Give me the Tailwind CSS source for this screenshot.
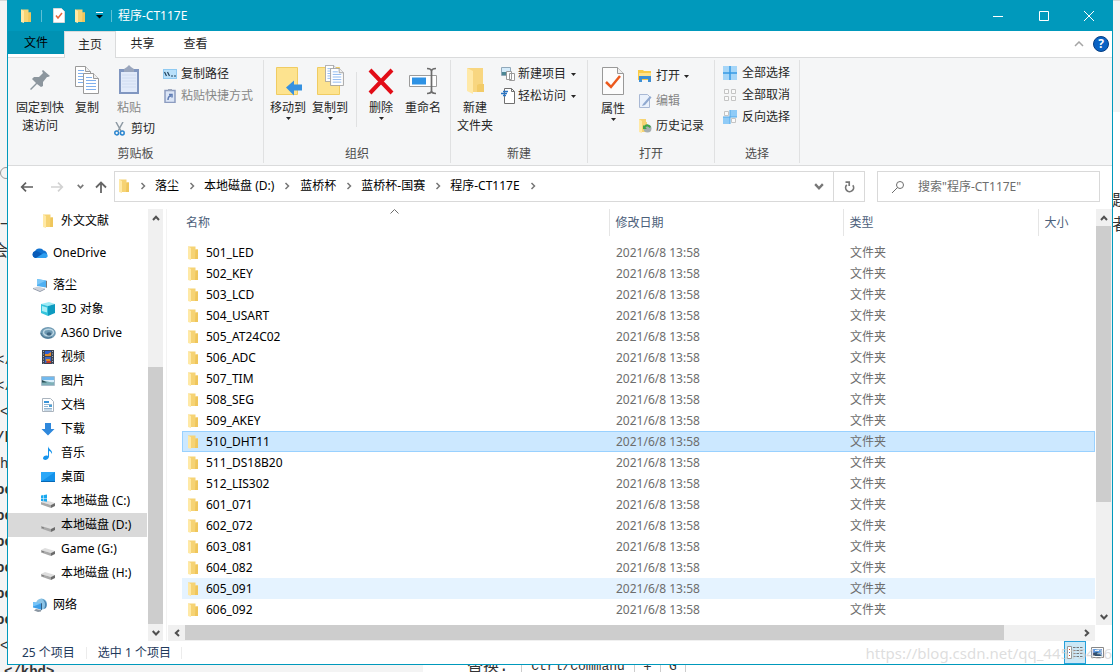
<!DOCTYPE html>
<html lang="zh-CN">
<head>
<meta charset="utf-8">
<title>程序-CT117E</title>
<script src="https://cdn.jsdelivr.net/npm/@tailwindcss/browser@4"></script>
</head>
<body class="relative h-screen overflow-hidden bg-[#f4f4f4] pl-[7px] pr-[7px] pb-[7px] font-['Noto_Sans','Noto_Sans_CJK_SC',sans-serif] text-[12px] leading-[18px] text-black">

<!-- Icon library -->
<svg class="hidden">
  <symbol id="folder" viewBox="0 0 12 16"><path d="M1 1.500h7.500v3H11v9.500H1z" fill="#f6d374"/><path d="M1 1.500l3 1.500v12L1 14z" fill="#ffe9a6"/><path d="M8.500 4.500H11V14H8z" fill="#efc65c"/></symbol>
  <symbol id="bigfolder" viewBox="0 0 18 28"><path d="M1 1h16v16h1v8H6z" fill="#f8d680"/><path d="M1 1l6 3v23l-6-3z" fill="#ffe9a8"/><path d="M13 17h5v8h-7V18z" fill="#f2cb68"/></symbol>
  <symbol id="caret" viewBox="0 0 5 3"><path d="M0 0h5L2.500 3z" fill="currentColor"/></symbol>
  <symbol id="up" viewBox="0 0 8 6"><path d="M1 5l3-3.200L7 5" fill="none" stroke="currentColor" stroke-width="2"/></symbol>
  <symbol id="down" viewBox="0 0 8 6"><path d="M0.700 1L4 4.500 7.300 1" fill="none" stroke="currentColor" stroke-width="2"/></symbol>
  <symbol id="left" viewBox="0 0 6 8"><path d="M5 1L1.800 4 5 7" fill="none" stroke="currentColor" stroke-width="2"/></symbol>
  <symbol id="right" viewBox="0 0 6 8"><path d="M1 1l3.200 3L1 7" fill="none" stroke="currentColor" stroke-width="2"/></symbol>
  <symbol id="crumb" viewBox="0 0 6 8"><path d="M1.500 1l3 3-3 3" fill="none" stroke="#777" stroke-width="1.500"/></symbol>
  <symbol id="page" viewBox="0 0 16 21"><path d="M.5.5h10l5 5v15H.5z" fill="#fff" stroke="#9a9a9a"/><path d="M10.500.500v5h5" fill="#eee" stroke="#9a9a9a"/><path d="M3 4.500h6M3 7.500h10M3 10.500h10M3 13.500h10M3 16.500h10" stroke="#7fb0ee"/></symbol>
  <symbol id="drive" viewBox="0 0 16 16"><path d="M1 9l4-2 10 3-4 2z" fill="#dedede"/><path d="M1 9l10 3v3L1 11.500z" fill="#a8a8a8"/><path d="M11 12l4-2v3l-4 2z" fill="#6b6b6b"/><path d="M2 10.500l2 .6" stroke="#777"/></symbol>
  <symbol id="cdrive" viewBox="0 0 16 16"><path d="M1 9l4-2 10 3-4 2z" fill="#dedede"/><path d="M1 9l10 3v3L1 11.500z" fill="#a8a8a8"/><path d="M11 12l4-2v3l-4 2z" fill="#6b6b6b"/><path d="M1 2.500l2.500-.4V5H1zM4 2l3-.4V5H4zM1 5.500h2.500v2.700L1 7.900zM4 5.500h3v3.200l-3-.4z" fill="#19a8ef"/></symbol>
  <symbol id="cloud" viewBox="0 0 16 16"><path d="M3.500 13a3.500 3.500 0 01-.6-6.700A5 5 0 0111.500 5.500 4 4 0 0113 13z" fill="#1172d0"/><path d="M3.500 13a3.500 3.500 0 010-6.900c2 0 5 2 8 3.900l2.500 2.500L13 13z" fill="#0a5cb8"/><path d="M4 13l7-4.500c3-1 5 1 4.700 2.800-.4 1.200-1.300 1.700-2.300 1.700z" fill="#2f9ff0"/></symbol>
  <symbol id="pc" viewBox="0 0 16 16"><path d="M5 2l9 1.500v7L5 9z" fill="#4fb0f2"/><path d="M5 2l9 1.500L5 8z" fill="#7cc8f8"/><path d="M14 3.500l1 .5v7l-1-.5z" fill="#777"/><path d="M1 11l5-1.500 7 2-5 2.500z" fill="#cfd3da"/><path d="M1 11l7 3 5-2.500v1L8 15l-7-3z" fill="#8f98a8"/></symbol>
  <symbol id="cube" viewBox="0 0 16 16"><path d="M1 3l8-2 6 2-7 2z" fill="#9eebf5"/><path d="M1 3l7 2v10l-7-3z" fill="#35c4dc"/><path d="M8 5l7-2v9l-7 3z" fill="#0d9bc0"/><path d="M2 5l5 1.500v5L2 10z" fill="#a8eef6"/></symbol>
  <symbol id="a360" viewBox="0 0 16 16"><ellipse cx="8" cy="8" rx="7.800" ry="6" fill="#6f9ab3"/><ellipse cx="8.500" cy="7.500" rx="5" ry="3.200" fill="none" stroke="#bcd6e3" stroke-width="1.500"/><ellipse cx="9" cy="9" rx="2.500" ry="1.700" fill="#3d6480"/><path d="M1 8c1 5 7 6 11 4" fill="none" stroke="#456f8a"/></symbol>
  <symbol id="film" viewBox="0 0 16 16"><path d="M2 1h12v14H2z" fill="#3b4454"/><path d="M5 2h6v5H5z" fill="#2e5fd0"/><path d="M5 8h6v6H5z" fill="#3c68c6"/><path d="M5 5h3l3-2v4H5zM6 10h4v2H6z" fill="#e08a2a"/><path d="M7 12h4v2H6z" fill="#c03a2a"/><path d="M3.500 2v13M12.500 2v13" stroke="#a8b0bc" stroke-dasharray="1 1.500"/></symbol>
  <symbol id="picture" viewBox="0 0 16 16"><path d="M1.500 3.500h13v9h-13z" fill="#d9eefb" stroke="#a9bccb"/><path d="M2 4h12v3H2z" fill="#72b9ee"/><path d="M2 8c4-1 7 2 12 1v3H2z" fill="#7fb0b8"/><path d="M2 7l5 2.500H2z" fill="#294f55"/></symbol>
  <symbol id="doc" viewBox="0 0 16 16"><path d="M2.500 1.500h8l3 3v10h-11z" fill="#fff" stroke="#aab4be"/><path d="M4 4h5v2H4z" fill="#3a94d8"/><path d="M4 7.500h8M4 9.500h4M4 11.500h8M4 13h8" stroke="#93b6d2"/><path d="M9 8h3v2H9z" fill="#4e9fd4"/></symbol>
  <symbol id="download" viewBox="0 0 16 16"><path d="M5 2h6v6h3.500L8 14.500 1.500 8H5z" fill="#2f88dc"/></symbol>
  <symbol id="music" viewBox="0 0 16 16"><path d="M8 1c0 3 5 4 4 8-1-2-2-3-3-3v6c-1 3-5 4-6 1.500C3 11 6 10 8 11z" fill="#1794ec"/></symbol>
  <symbol id="desktop" viewBox="0 0 16 16"><path d="M1 3h14v10H1z" fill="#1492ea"/><path d="M1 3h14L2 12H1z" fill="#2ba8f8"/><path d="M1 12h14v1H1z" fill="#0668b6"/></symbol>
  <symbol id="network" viewBox="0 0 16 16"><circle cx="9.500" cy="7" r="5.500" fill="#8cc4e6"/><path d="M9 1.500c4 2 5 6 3 10.500l2-1c2-4 0-8-5-9.500z" fill="#4a86b4"/><path d="M1 5l8 1.500v6L1 10.500z" fill="#3ea0ea"/><path d="M1 5l8 1.500-8 3z" fill="#76c4f8"/><path d="M4 12l5 1v1.500L6 15l-4-1.500z" fill="#8a96a2"/><path d="M9 6.500l1-.5v6.500l-1 1z" fill="#335e84"/></symbol>
</svg>

<!-- Web page behind the window -->
<div aria-hidden="true" class="absolute inset-0 overflow-hidden text-[#333]">
  <div class="absolute top-0 left-0 h-px w-full bg-[#d8d8d8]"></div>
  <div class="absolute top-[112px] right-0 bottom-0 w-[10px] bg-white"></div>
  <div class="absolute bottom-0 left-[423px] right-0 h-[10px] bg-white"></div>
  <div class="absolute top-[167px] left-0 size-3 rounded-full border border-[#999]"></div>
  <div class="absolute top-[211px] left-0 text-[16px] leading-[26px] whitespace-nowrap"><p>一</p><p class="-indent-2">会</p></div>
  <div class="absolute top-[347px] left-0 font-['Liberation_Mono',monospace] text-[14px] leading-[26px] whitespace-nowrap">
    <p class="-indent-1">&lt;/</p><p class="-indent-1">&lt;/</p><p>&lt;</p><p class="-indent-1 font-bold">/k</p><p>h</p>
    <p class="-indent-1 font-bold">oo</p><p class="-indent-1 font-bold">oo</p><p class="-indent-1 font-bold">oo</p><p class="-indent-1 font-bold">oo</p><p class="-indent-1 font-bold">oo</p><p class="-indent-1 font-bold">oo</p><p>&lt;</p>
  </div>
  <div class="absolute top-[188px] -right-2 text-[16px] leading-[24px]"><p>题</p><p>者</p></div>
  <p class="absolute top-[663px] left-1 font-['Liberation_Mono',monospace] text-[14px] font-bold">&lt;/kbd&gt;</p>
  <div class="absolute top-[656px] left-[467px] flex font-['Liberation_Mono','Noto_Sans_CJK_SC',monospace] text-[14px] leading-[22px]">
    <span class="w-[54px] text-[16px]">替换:</span><span class="w-[114px] border-x border-[#ccc] text-center text-[13px]">Ctrl/Command</span><span class="w-[25px] text-center">+</span><span class="w-[26px] border-x border-[#ccc] text-center text-[13px]">G</span>
  </div>
</div>

<main class="relative flex h-full flex-col border-x border-b border-[#0099bc] bg-white">
  <!-- Title bar -->
  <header class="flex h-[31px] shrink-0 items-center bg-[#0099bc] pl-3 text-white">
    <svg class="h-4 w-3"><use href="#folder"/></svg>
    <span class="ml-[9px] h-3 w-px bg-[#5fc0d5]"></span>
    <button aria-label="属性" class="ml-[11px]"><svg class="h-[15px] w-3" viewBox="0 0 12 15"><path d="M.5.500h8l3 3v11H.500z" fill="#fff" stroke="#d8d8d8"/><path d="M3 7.500l2 2.500 4-5" fill="none" stroke="#e8643a" stroke-width="1.500"/></svg></button>
    <button aria-label="新建文件夹" class="ml-[9px]"><svg class="h-4 w-3"><use href="#folder"/></svg></button>
    <button aria-label="自定义快速访问工具栏" class="ml-[10px]"><svg class="h-[7px] w-[7px]" viewBox="0 0 7 7"><path d="M0 0h7v1H0z" fill="#fff"/><path d="M0 3h7L3.500 6.500z" fill="#000"/></svg></button>
    <span class="ml-2 h-3 w-px bg-[#5fc0d5]"></span>
    <h1 class="ml-[6px] flex-1 text-[12px]">程序-CT117E</h1>
    <button aria-label="最小化" class="flex h-full w-[46px] items-center justify-center"><svg class="size-[10px]" viewBox="0 0 10 10"><path d="M0 5.500h10" stroke="#fff"/></svg></button>
    <button aria-label="最大化" class="flex h-full w-[45px] items-center justify-center"><svg class="size-[10px]" viewBox="0 0 10 10"><path d="M.5.500h9v9h-9z" fill="none" stroke="#fff"/></svg></button>
    <button aria-label="关闭" class="flex h-full w-[46px] items-center justify-center"><svg class="size-[10px]" viewBox="0 0 10 10"><path d="M0 0l10 10M10 0L0 10" stroke="#fff"/></svg></button>
  </header>

  <!-- Ribbon tabs -->
  <nav class="flex h-[27px] shrink-0 items-start border-b border-[#dadbdc] bg-white">
    <button class="h-[23px] w-14 bg-[#0092b3]">文件</button>
    <button class="h-[27px] w-[52px] border-x border-t border-[#dadbdc] bg-[#f5f6f7] text-[#262626]">主页</button>
    <button class="h-[25px] w-[53px] text-[#262626]">共享</button>
    <button class="h-[25px] w-[53px] text-[#262626]">查看</button>
    <span class="flex-1"></span>
    <button aria-label="折叠功能区" class="mt-[10px] mr-[9px]"><svg class="h-[6px] w-[10px]" viewBox="0 0 10 6"><path d="M1 5l4-4 4 4" fill="none" stroke="#a5a5a5" stroke-width="1.500"/></svg></button>
    <button aria-label="帮助" class="mt-[5px] mr-[3px] flex size-4 items-center justify-center rounded-full border border-[#063d82] bg-[#0a63c4] text-[12px] leading-none font-bold text-white">?</button>
  </nav>

  <!-- Ribbon -->
  <section class="flex h-[108px] shrink-0 border-b border-[#dadbdc] bg-[#f5f6f7] pt-[2px] pb-[2px] text-[#262626]">
    <div class="flex w-[256px] flex-col border-r border-[#e0e1e2]">
      <div class="flex flex-1 pt-[5px] pl-2">
        <button class="flex w-12 flex-col items-center"><svg class="mb-[2px] h-8 w-[22px]" viewBox="0 0 22 32"><path d="M14 5l7 6-2 1-1 0-4 5 0 4-2 1-4-3-6 6-1-1 6-6-4-4 2-2 5 0 4-4-1-2z" fill="#8c969e"/></svg><span class="leading-[18px]">固定到快<br>速访问</span></button>
        <button class="flex w-[46px] flex-col items-center"><svg class="mb-[2px] h-8 w-6" viewBox="0 0 24 32"><use href="#page" y="1" width="16" height="21"/><use href="#page" x="8" y="8" width="16" height="21"/></svg><span>复制</span></button>
        <div class="flex w-[53px] flex-col items-start">
          <button class="flex w-[38px] flex-col items-center text-[#868686]"><svg class="mb-[2px] h-8 w-5" viewBox="0 0 20 32"><path d="M0 4h20v25H0z" fill="#8096c0"/><path d="M2 7h16v20H2z" fill="#e1eafa"/><path d="M5 4l3-2 2-2 2 2 3 2v3H5z" fill="#9aa6bd"/><path d="M3 10h14M3 13h14M3 16h14M3 19h14M3 22h14" stroke="#d0dcf0"/></svg><span>粘贴</span></button>
          <button class="mt-[3px] ml-1 flex items-center gap-[6px]"><svg class="h-[14px] w-[11px]" viewBox="0 0 11 14"><path d="M2 0l5 9M9 0L4 9" stroke="#8d99a3" stroke-width="1.500"/><circle cx="2.700" cy="11" r="1.900" fill="none" stroke="#2c86cf" stroke-width="1.500"/><circle cx="8.300" cy="11" r="1.900" fill="none" stroke="#2c86cf" stroke-width="1.500"/></svg><span>剪切</span></button>
        </div>
        <div class="flex flex-col items-start gap-1">
          <button class="flex items-center gap-1"><svg class="h-[14px] w-[14px]" viewBox="0 0 14 14"><path d="M0 2h14v10H0z" fill="#8fcaf2"/><path d="M1 3h12v8H1z" fill="#b9e0fa"/><path d="M1.500 5l2 4M4.500 5l2 4M8 9h2M11 9h2" stroke="#23435d" stroke-width="1.200"/></svg><span>复制路径</span></button>
          <button class="flex items-center gap-1 text-[#868686]"><svg class="h-[14px] w-[14px]" viewBox="0 0 14 14"><path d="M2 1.500h10v12H2z" fill="#dbe5f6" stroke="#8c9cc0" stroke-width="1.500"/><path d="M5 0h4v2H5z" fill="#9aa6bd"/><path d="M5 11c0-3 1-4 3-4M6 5.500h3v3" fill="none" stroke="#5f7cb4" stroke-width="1.500"/></svg><span>粘贴快捷方式</span></button>
        </div>
      </div>
      <h2 class="text-center text-[#4c4c4c]">剪贴板</h2>
    </div>

    <div class="flex w-[187px] flex-col border-r border-[#e0e1e2]">
      <div class="flex flex-1 items-start pt-[5px] pl-[3px]">
        <button class="flex w-[42px] flex-col items-center"><svg class="mb-[2px] h-8 w-[28px]" viewBox="0 0 28 32"><path d="M2.500 2.500h21v27h-21z" fill="#fde38f" stroke="#f0cc62"/><path d="M12 22.500l8-7v4h8v6h-8v5z" fill="#3591e0"/></svg><span>移动到</span><svg class="h-[3px] w-[5px]"><use href="#caret"/></svg></button>
        <button class="flex w-[42px] flex-col items-center"><svg class="mb-[2px] h-8 w-[28px]" viewBox="0 0 28 32"><path d="M1.500 2.500h22v27h-22z" fill="#fde38f" stroke="#f0cc62"/><use href="#page" x="9" y="0" width="13" height="17"/><use href="#page" x="14" y="3" width="14" height="18"/></svg><span>复制到</span><svg class="h-[3px] w-[5px]"><use href="#caret"/></svg></button>
        <span class="mx-[5px] mt-[7px] h-[55px] w-px bg-[#e0e1e2]"></span>
        <button class="flex w-[38px] flex-col items-center"><svg class="mb-[2px] h-8 w-[26px]" viewBox="0 0 26 32"><path d="M2 5l22 23M24 5L2 28" stroke="#e20d17" stroke-width="4"/></svg><span>删除</span><svg class="h-[3px] w-[5px]"><use href="#caret"/></svg></button>
        <button class="flex w-[46px] flex-col items-center"><svg class="mb-[2px] h-8 w-[28px]" viewBox="0 0 28 32"><path d="M.5 10.500h27v11H.500z" fill="#fff" stroke="#9b9b9b"/><path d="M3 12.500h14v7H3z" fill="#2e92e4"/><path d="M18 3.500c3 0 4.500 1 4.500 3v19c0 2-1.500 3-4.500 3M27 3.500c-3 0-4.500 1-4.500 3v19c0 2 1.500 3 4.500 3" fill="none" stroke="#6c6c6c" stroke-width="1.700"/></svg><span>重命名</span></button>
      </div>
      <h2 class="text-center text-[#4c4c4c]">组织</h2>
    </div>

    <div class="flex w-[137px] flex-col border-r border-[#e0e1e2]">
      <div class="flex flex-1 items-start pt-[5px] pl-1">
        <button class="flex w-10 flex-col items-center"><svg class="mb-[2px] h-8 w-[18px]" viewBox="0 0 18 32"><use href="#bigfolder" y="2" width="18" height="28"/></svg><span class="whitespace-nowrap">新建<br>文件夹</span></button>
        <div class="ml-[6px] flex flex-col items-start gap-1">
          <button class="flex items-center gap-[3px]"><svg class="size-[14px]" viewBox="0 0 14 14"><path d="M.5.500h9v8h-9z" fill="#d4ebfa" stroke="#90a8ba"/><path d="M1 5h8v3H1z" fill="#4d8794"/><path d="M5.500 4.500h5v8h-5zM8.500 6.500h5v7h-5z" fill="#fff" stroke="#9a9a9a"/></svg><span>新建项目</span><svg class="ml-[2px] h-[3px] w-[5px]"><use href="#caret"/></svg></button>
          <button class="flex items-center gap-[3px]"><svg class="h-[16px] w-[14px]" viewBox="0 0 14 16"><path d="M3.500.500h7l3 3v12h-10z" fill="#fff" stroke="#6f6f6f"/><path d="M10.500.500v3h3" fill="none" stroke="#6f6f6f"/><path d="M2 3.500h5M0 5.500h6M2 7.500h3" stroke="#2874c4" stroke-width="1.400"/></svg><span>轻松访问</span><svg class="ml-[2px] h-[3px] w-[5px]"><use href="#caret"/></svg></button>
        </div>
      </div>
      <h2 class="text-center text-[#4c4c4c]">新建</h2>
    </div>

    <div class="flex w-[127px] flex-col border-r border-[#e0e1e2]">
      <div class="flex flex-1 items-start pt-[5px] pl-[5px]">
        <button class="flex w-10 flex-col items-center"><svg class="mb-[3px] h-8 w-[22px]" viewBox="0 0 22 32"><path d="M.5 2.500h15l6 6v21H.500z" fill="#fcfcfc" stroke="#999"/><path d="M15.500 2.500v6h6" fill="#eee" stroke="#999"/><path d="M4 17l5 5 9-11" fill="none" stroke="#ec5a1e" stroke-width="2.500"/></svg><span>属性</span><svg class="h-[3px] w-[5px]"><use href="#caret"/></svg></button>
        <div class="mt-[2px] ml-[5px] flex flex-col items-start gap-[7px]">
          <button class="flex items-center gap-1"><svg class="size-[14px]" viewBox="0 0 14 14"><path d="M0 1h5l1 1h7v9H0z" fill="#f9ca45"/><path d="M1 4h12v3H1z" fill="#ffe28a"/><path d="M1 7h12v6h-3v-3H4v3H1z" fill="#3d8fd4"/></svg><span>打开</span><svg class="h-[3px] w-[5px]"><use href="#caret"/></svg></button>
          <button class="flex items-center gap-1 text-[#868686]"><svg class="size-[14px]" viewBox="0 0 14 14"><path d="M1.500.500h8l2 2v11h-10z" fill="#eaf1fb" stroke="#a8b8d4"/><path d="M5 10l7-8 1.500 1.500L7 11l-3 1z" fill="#90a9d0"/></svg><span>编辑</span></button>
          <button class="flex items-center gap-1"><svg class="size-[14px]" viewBox="0 0 14 14"><path d="M1 0h7v3h1v10H1z" fill="#f7d473"/><path d="M1 0l3 2v12l-3-1z" fill="#ffe9a6"/><circle cx="9.500" cy="9.500" r="4" fill="#a5aeb1"/><path d="M13 8a4 4 0 00-7-1l-1-1v4h4L7.500 8.500c1-1.500 3-1 4 .5z" fill="#41a548"/></svg><span>历史记录</span></button>
        </div>
      </div>
      <h2 class="text-center text-[#4c4c4c]">打开</h2>
    </div>

    <div class="flex w-[85px] flex-col border-r border-[#e0e1e2]">
      <div class="flex flex-1 flex-col items-start gap-1 pt-1 pl-2">
        <button class="flex items-center gap-[5px]"><svg class="size-[14px]" viewBox="0 0 14 14"><path d="M0 0h14v14H0z" fill="#a6d6f8"/><path d="M7 0v14M0 7h14" stroke="#379be4" stroke-width="1.500"/></svg><span>全部选择</span></button>
        <button class="flex items-center gap-[5px]"><svg class="size-[14px]" viewBox="0 0 14 14"><path d="M1.500 1.500h4v4h-4zM8.500 1.500h4v4h-4zM1.500 8.500h4v4h-4zM8.500 8.500h4v4h-4z" fill="#fafafa" stroke="#c4c4c4"/></svg><span>全部取消</span></button>
        <button class="flex items-center gap-[5px]"><svg class="size-[14px]" viewBox="0 0 14 14"><path d="M1.500 1.500h4v4h-4zM8.500 8.500h4v4h-4z" fill="#fafafa" stroke="#c4c4c4"/><path d="M7 0h7v7H7zM0 7h7v7H0z" fill="#8fcbf7"/><path d="M7 0v14M0 7h14" stroke="#52a9e8"/></svg><span>反向选择</span></button>
      </div>
      <h2 class="text-center text-[#4c4c4c]">选择</h2>
    </div>
  </section>

  <!-- Address row -->
  <div class="flex h-[43px] shrink-0 items-start pt-[5px] pr-3 pl-3">
    <div class="flex h-[31px] w-[94px] shrink-0 items-center">
      <button aria-label="后退"><svg class="h-[10px] w-[14px]" viewBox="0 0 14 10"><path d="M13 5H2M6 .700L1.700 5 6 9.300" fill="none" stroke="#5f5f5f" stroke-width="1.700"/></svg></button>
      <button aria-label="前进" class="ml-4" disabled><svg class="h-[10px] w-[14px]" viewBox="0 0 14 10"><path d="M1 5h11M8 .700L12.300 5 8 9.300" fill="none" stroke="#d2d2d2" stroke-width="1.700"/></svg></button>
      <button aria-label="最近浏览的位置" class="ml-[13px] text-[#777]"><svg class="h-[5px] w-[7px]"><use href="#down" width="7" height="5"/></svg></button>
      <button aria-label="上移" class="ml-[11px]"><svg class="h-3 w-3" viewBox="0 0 12 12"><path d="M6 12V2M1 6.500L6 1.500l5 5" fill="none" stroke="#666" stroke-width="1.800"/></svg></button>
    </div>
    <div class="flex h-[31px] flex-1 items-center border border-[#d9d9d9] pl-[3px] pb-px">
      <svg class="h-4 w-3"><use href="#folder"/></svg>
      <svg class="mr-[9px] ml-[10px] h-2 w-[6px]"><use href="#crumb"/></svg><a href="#">落尘</a>
      <svg class="mr-[9px] ml-[10px] h-2 w-[6px]"><use href="#crumb"/></svg><a href="#">本地磁盘 (D:)</a>
      <svg class="mx-[10px] h-2 w-[6px]"><use href="#crumb"/></svg><a href="#">蓝桥杯</a>
      <svg class="mr-[9px] ml-[10px] h-2 w-[6px]"><use href="#crumb"/></svg><a href="#">蓝桥杯-国赛</a>
      <svg class="mr-[9px] ml-[10px] h-2 w-[6px]"><use href="#crumb"/></svg><a href="#">程序-CT117E</a>
      <svg class="mx-[10px] h-2 w-[6px]"><use href="#crumb"/></svg>
      <span class="flex-1"></span>
      <button aria-label="以前的位置" class="mr-[9px] text-[#777]"><svg class="h-[7px] w-[10px]"><use href="#down" width="10" height="7"/></svg></button>
      <button aria-label="刷新" class="-mb-px flex h-[29px] w-[31px] items-center justify-center border-l border-[#d9d9d9]"><svg class="h-3 w-[11px]" viewBox="0 0 11 12"><path d="M2.800 3.800A4 4 0 108.800 4.200M1.500 1.200H5.200V5" fill="none" stroke="#777" stroke-width="1.700"/></svg></button>
    </div>
    <label class="ml-3 flex h-[31px] w-[223px] items-center border border-[#d9d9d9] pl-[14px]">
      <svg class="size-3" viewBox="0 0 12 12"><circle cx="8" cy="4" r="3.500" fill="none" stroke="#6d6d6d"/><path d="M5.500 6.500L0 12" stroke="#6d6d6d"/></svg>
      <input type="search" aria-label="搜索" placeholder="搜索&quot;程序-CT117E&quot;" class="ml-[14px] w-40 outline-none placeholder:text-[#6d6d6d]">
    </label>
  </div>

  <!-- Navigation pane and file list -->
  <div class="flex min-h-0 flex-1">
    <div class="flex w-[159px] shrink-0 border-r border-[#f3f3f3]">
      <ul id="tree" class="w-[140px]"></ul>
      <div class="flex w-[15px] flex-col items-center bg-[#f0f0f0] text-[#505050]">
        <button aria-label="向上滚动" class="flex h-[17px] items-center"><svg class="h-[6px] w-2"><use href="#up"/></svg></button>
        <div class="mt-[141px] w-full flex-1 bg-[#cdcdcd]"></div>
        <button aria-label="向下滚动" class="flex h-[17px] items-center"><svg class="h-[6px] w-2"><use href="#down"/></svg></button>
      </div>
    </div>
    <div class="flex min-w-0 flex-1 flex-col">
      <div class="flex min-h-0 flex-1">
        <div class="relative min-w-0 flex-1 overflow-hidden pl-[15px]">
          <svg class="absolute top-0 left-[223px] h-[5px] w-[9px]" viewBox="0 0 9 5"><path d="M.5 4.500l4-4 4 4" fill="none" stroke="#6d6d6d"/></svg>
          <table class="w-full table-fixed border-collapse text-left">
            <colgroup><col><col class="w-[234px]"><col class="w-[195px]"><col class="w-[57px]"></colgroup>
            <thead class="text-[#4c607a]">
              <tr class="h-[27px]"><th class="pl-1 font-normal">名称</th><th class="border-l border-[#e5e5e5] pl-[6px] font-normal">修改日期</th><th class="border-l border-[#e5e5e5] pl-[6px] font-normal">类型</th><th class="border-l border-[#e5e5e5] pl-[6px] font-normal">大小</th></tr>
            </thead>
            <tbody id="files"><tr class="h-[6px]"><td colspan="4"></td></tr></tbody>
          </table>
        </div>
        <div class="ml-px flex w-4 flex-col items-center bg-[#f0f0f0] pr-px text-[#505050]">
          <button aria-label="向上滚动" class="flex h-[17px] items-center"><svg class="h-[6px] w-2"><use href="#up"/></svg></button>
          <div class="h-[276px] w-full bg-[#cdcdcd]"></div>
          <span class="flex-1"></span>
          <button aria-label="向下滚动" class="flex h-[17px] items-center"><svg class="h-[6px] w-2"><use href="#down"/></svg></button>
        </div>
      </div>
      <div class="mr-[17px] ml-px flex h-4 shrink-0 items-center bg-[#f0f0f0] text-[#505050]">
        <button aria-label="向左滚动" class="flex w-[17px] justify-center"><svg class="h-2 w-[6px]"><use href="#left"/></svg></button>
        <div class="mb-px h-[15px] flex-1 bg-[#cdcdcd]"></div>
        <button aria-label="向右滚动" class="flex w-[91px] justify-end pr-[5px]"><svg class="h-2 w-[6px]"><use href="#right"/></svg></button>
      </div>
    </div>
  </div>

  <!-- Status bar -->
  <footer class="flex h-[23px] shrink-0 items-center pl-[14px] text-[#1e395b]">
    <span>25 个项目</span><span class="mx-[11px] h-3 w-px bg-[#ececec]"></span><span>选中 1 个项目</span><span class="ml-[10px] h-3 w-px bg-[#ececec]"></span>
    <span class="flex-1"></span>
    <button aria-label="详细信息" class="flex h-[23px] w-[22px] items-center justify-center border border-[#26a0da] bg-[#cbe8f6]"><svg class="h-[13px] w-4" viewBox="0 0 16 13"><path d="M.5.500h4v12h-4z" fill="#fff" stroke="#999"/><path d="M2 3.500h1M2 9.500h1" stroke="#d04a2a"/><path d="M2 6.500h1" stroke="#3a7ad0"/><path d="M6 1.500h10M6 4.500h10M6 7.500h10M6 10.500h10" stroke="#777" stroke-dasharray="2.500 1"/></svg></button>
    <button aria-label="大图标" class="mr-[8px] ml-[5px]"><svg class="h-[11px] w-[13px]" viewBox="0 0 13 11"><path d="M.5.500h12v10H.500z" fill="#fff" stroke="#888"/><path d="M2 2h9v7H2z" fill="#5f9be0"/><path d="M2 6l4-1 5 3v1H2z" fill="#31506e"/><path d="M4 3h4v1H4z" fill="#fff"/></svg></button>
  </footer>

  <p class="pointer-events-none absolute right-0 bottom-0 text-[15px] leading-[22px] text-[#cfcfcf]/70">https://blog.csdn.net/qq_44515436</p>
</main>

<script>
  const tree = [
    ['folder', '外文文献', 1], ['cloud', 'OneDrive', 0], ['pc', '落尘', 0], ['cube', '3D 对象', 1], ['a360', 'A360 Drive', 1],
    ['film', '视频', 1], ['picture', '图片', 1], ['doc', '文档', 1], ['download', '下载', 1], ['music', '音乐', 1], ['desktop', '桌面', 1],
    ['cdrive', '本地磁盘 (C:)', 1], ['drive', '本地磁盘 (D:)', 1], ['drive', 'Game (G:)', 1], ['drive', '本地磁盘 (H:)', 1], ['network', '网络', 0]
  ];
  const spaced = ['OneDrive', '落尘', '网络'];
  document.getElementById('tree').innerHTML = tree.map(([icon, name, deep]) =>
    `<li class="${spaced.includes(name) ? 'mt-2' : ''}"><a href="#" class="flex h-6 w-[139px] items-center gap-[5px] whitespace-nowrap ${deep ? 'pl-8' : 'pl-6'} ${name === '本地磁盘 (D:)' ? 'bg-[#d9d9d9]' : ''}"><svg class="size-4"><use href="#${icon}"/></svg><span>${name}</span></a></li>`
  ).join('');

  const files = ['501_LED', '502_KEY', '503_LCD', '504_USART', '505_AT24C02', '506_ADC', '507_TIM', '508_SEG', '509_AKEY', '510_DHT11',
    '511_DS18B20', '512_LIS302', '601_071', '602_072', '603_081', '604_082', '605_091', '606_092'];
  const state = { '510_DHT11': 'bg-[#cce8ff] outline outline-1 -outline-offset-1 outline-[#99d1ff]', '605_091': 'bg-[#e5f3ff]' };
  document.getElementById('files').insertAdjacentHTML('beforeend', files.map(name =>
    `<tr class="h-[21px] text-[#6d6d6d] ${state[name] || ''}"><td class="p-0 text-black"><span class="flex items-center gap-[7px] pl-[5px]"><svg class="h-4 w-3"><use href="#folder"/></svg>${name}</span></td><td class="p-0 pl-[7px]">2021/6/8 13:58</td><td class="p-0 pl-[7px]">文件夹</td><td class="p-0"></td></tr>`
  ).join(''));
</script>
</body>
</html>
